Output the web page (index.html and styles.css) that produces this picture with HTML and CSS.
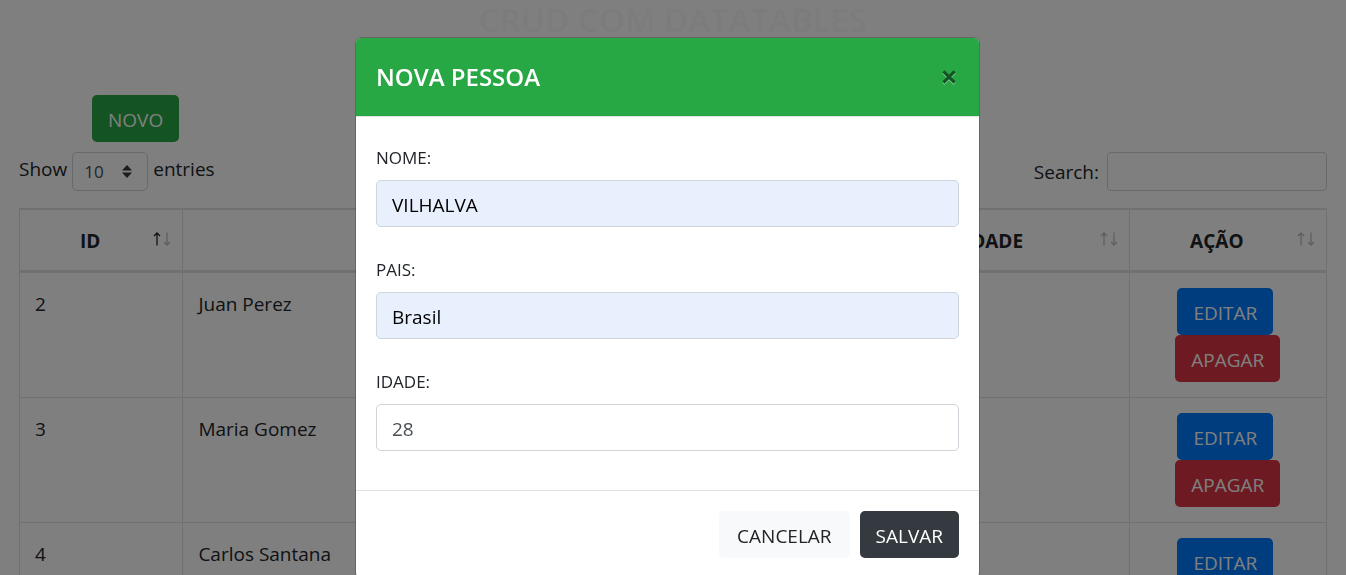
FILE: index.html
```html
<!DOCTYPE html>
<html lang="pt-BR">
<head>
<meta charset="utf-8">
<title>CRUD com Datatables</title>
<link rel="stylesheet" href="styles.css">
</head>
<body>
<svg class="sprite">
  <symbol id="sort" viewBox="0 0 18 16">
    <g fill="none" stroke="currentColor">
      <path class="sort-up" stroke-width="1.3" d="M4 14.5V2M1 5l3-3 3 3"/>
      <path opacity=".3" stroke-width="1.3" d="M14 1.5V14M11 11l3 3 3-3"/>
    </g>
  </symbol>
</svg>
<main class="page">
  <h1 class="page-title">CRUD COM DATATABLES</h1>
  <div class="actions"><button class="btn btn-success" type="button">NOVO</button></div>
  <div class="toolbar">
    <div class="length">
      <label for="len">Show</label>
      <span class="select-wrap">
        <select id="len"><option>10</option><option>25</option><option>50</option></select>
        <svg class="caret" viewBox="0 0 10 13"><path fill="#343a40" d="M5 0l5 5.4H0zM5 13L0 7.6h10z"/></svg>
      </span>
      <span>entries</span>
    </div>
    <div class="filter">
      <label for="search">Search:</label>
      <input id="search" type="search">
    </div>
  </div>
  <table class="people">
    <colgroup><col class="c-id"><col class="c-name"><col class="c-country"><col class="c-age"><col class="c-action"></colgroup>
    <thead>
      <tr>
        <th class="sorted">ID<svg class="sort"><use href="#sort"/></svg></th>
        <th>NOME<svg class="sort"><use href="#sort"/></svg></th>
        <th>PAIS<svg class="sort"><use href="#sort"/></svg></th>
        <th>IDADE<svg class="sort"><use href="#sort"/></svg></th>
        <th>AÇÃO<svg class="sort"><use href="#sort"/></svg></th>
      </tr>
    </thead>
    <tbody>
      <tr><td>2</td><td>Juan Perez</td><td></td><td></td><td><div class="row-actions"><button class="btn btn-primary" type="button">EDITAR</button><button class="btn btn-danger" type="button">APAGAR</button></div></td></tr>
      <tr><td>3</td><td>Maria Gomez</td><td></td><td></td><td><div class="row-actions"><button class="btn btn-primary" type="button">EDITAR</button><button class="btn btn-danger" type="button">APAGAR</button></div></td></tr>
      <tr><td>4</td><td>Carlos Santana</td><td></td><td></td><td><div class="row-actions"><button class="btn btn-primary" type="button">EDITAR</button></div></td></tr>
    </tbody>
  </table>
</main>
<div class="backdrop">
  <form class="modal" role="dialog" aria-labelledby="modal-title">
    <header class="modal-header">
      <h2 id="modal-title">NOVA PESSOA</h2>
      <button class="close" type="button" aria-label="Fechar"><svg viewBox="0 0 14 15"><path d="M1.4 2.4l11.2 11.2M12.6 2.4L1.4 13.6" stroke="#fff" stroke-width="3"/><path d="M1.4 1.4l11.2 11.2M12.6 1.4L1.4 12.6" stroke="#000" stroke-width="3"/></svg></button>
    </header>
    <div class="modal-body">
      <div class="field"><label for="nome">NOME:</label><input class="filled" id="nome" type="text" value="VILHALVA"></div>
      <div class="field"><label for="pais">PAIS:</label><input class="filled" id="pais" type="text" value="Brasil"></div>
      <div class="field"><label for="idade">IDADE:</label><input id="idade" type="text" inputmode="numeric" value="28"></div>
    </div>
    <footer class="modal-footer">
      <button class="btn btn-light" type="button">CANCELAR</button>
      <button class="btn btn-dark" type="submit">SALVAR</button>
    </footer>
  </form>
</div>
</body>
</html>
```
FILE: styles.css
```css
* { box-sizing: border-box; }
body {
  margin: 0;
  height: 100vh;
  overflow: hidden;
  background: #fff;
  color: #212529;
  font: 19px/30px "Open Sans", "Noto Sans", sans-serif;
}
button, input, select { font: inherit; color: inherit; margin: 0; }
.sprite { display: none; }
.page { padding: 0 19px; }
.page-title {
  margin: 0 0 55px;
  color: #f8f9fa;
  font-size: 33px;
  font-weight: 600;
  line-height: 40px;
  text-align: center;
}
.actions { padding-left: 73px; margin-bottom: 10px; }
.btn {
  display: block;
  height: 47px;
  padding: 2px 15px 0;
  border: 1px solid transparent;
  border-radius: 5px;
  color: #fff;
}
.btn-success { background: #28a745; }
.btn-primary { background: #007bff; }
.btn-danger { background: #dc3545; }
.btn-light { padding: 2px 17px 0; background: #f8f9fa; color: #212529; }
.btn-dark { background: #343a40; }

.toolbar {
  display: flex;
  justify-content: space-between;
  margin-bottom: 16px;
}
.length { display: flex; gap: 5px; line-height: 34px; }
.filter { display: flex; gap: 8px; line-height: 40px; }
.select-wrap { position: relative; }
.select-wrap select {
  display: block;
  appearance: none;
  width: 76px;
  height: 39px;
  padding: 0 11px;
  border: 1px solid #ced4da;
  border-radius: 5px;
  background: #fff;
  color: #495057;
  font-size: 17px;
}
.caret { position: absolute; right: 16px; top: 13px; width: 10px; height: 13px; }
.filter input {
  width: 220px;
  height: 39px;
  padding: 0 10px;
  border: 1px solid #ced4da;
  border-radius: 4px;
  background: #fff;
}

.people {
  width: 100%;
  table-layout: fixed;
  border-collapse: collapse;
}
.c-id { width: 12.5%; }
.c-name { width: 33.2%; }
.c-country { width: 20.2%; }
.c-age { width: 19%; }
.c-action { width: 15.1%; }
.people th, .people td { border: 1px solid #dee2e6; vertical-align: top; }
.people th {
  position: relative;
  padding: 16px 37px 14px 15px;
  border-top-width: 2px;
  border-bottom-width: 3px;
  font-weight: 700;
}
.people td { padding: 15px; line-height: 32px; }
.sort { position: absolute; right: 11px; top: 21px; width: 18px; height: 16px; }
.sort-up { opacity: var(--up, .3); }
.sorted { --up: 1; }
.row-actions { display: flex; flex-direction: column; align-items: center; line-height: 30px; }
.row-actions .btn-primary { margin-right: 5px; }

.backdrop {
  position: fixed;
  inset: 0;
  padding: 37px 11px 0 0;
  background: rgba(0, 0, 0, .5);
}
.modal {
  max-width: 625px;
  margin: 0 auto;
  border: 1px solid rgba(0, 0, 0, .2);
  border-radius: 6px;
  background: #fff;
  background-clip: padding-box;
}
.modal-header {
  display: flex;
  justify-content: space-between;
  align-items: center;
  padding: 20px;
  border-bottom: 1px solid #dee2e6;
  border-radius: 5px 5px 0 0;
  background: #28a745;
  background-clip: padding-box;
  color: #fff;
}
.modal-header h2 { margin: 0; font-size: 24px; font-weight: 600; line-height: 38px; }
.close { padding: 0 3px; border: 0; background: none; opacity: .5; }
.close svg { display: block; width: 14px; height: 15px; }
.modal-body { display: grid; gap: 21px; padding: 19px 20px 39px; }
.field label { display: block; padding: 7px 0; font-size: 17px; }
.field input {
  display: block;
  width: 100%;
  height: 47px;
  padding: 3px 15px 0;
  border: 1px solid #ced4da;
  border-radius: 5px;
  background: #fff;
  color: #495057;
}
.field .filled { background: #e8f0fe; color: #000; }
.modal-footer {
  display: flex;
  justify-content: flex-end;
  gap: 10px;
  padding: 20px;
  border-top: 1px solid #dee2e6;
}
```
